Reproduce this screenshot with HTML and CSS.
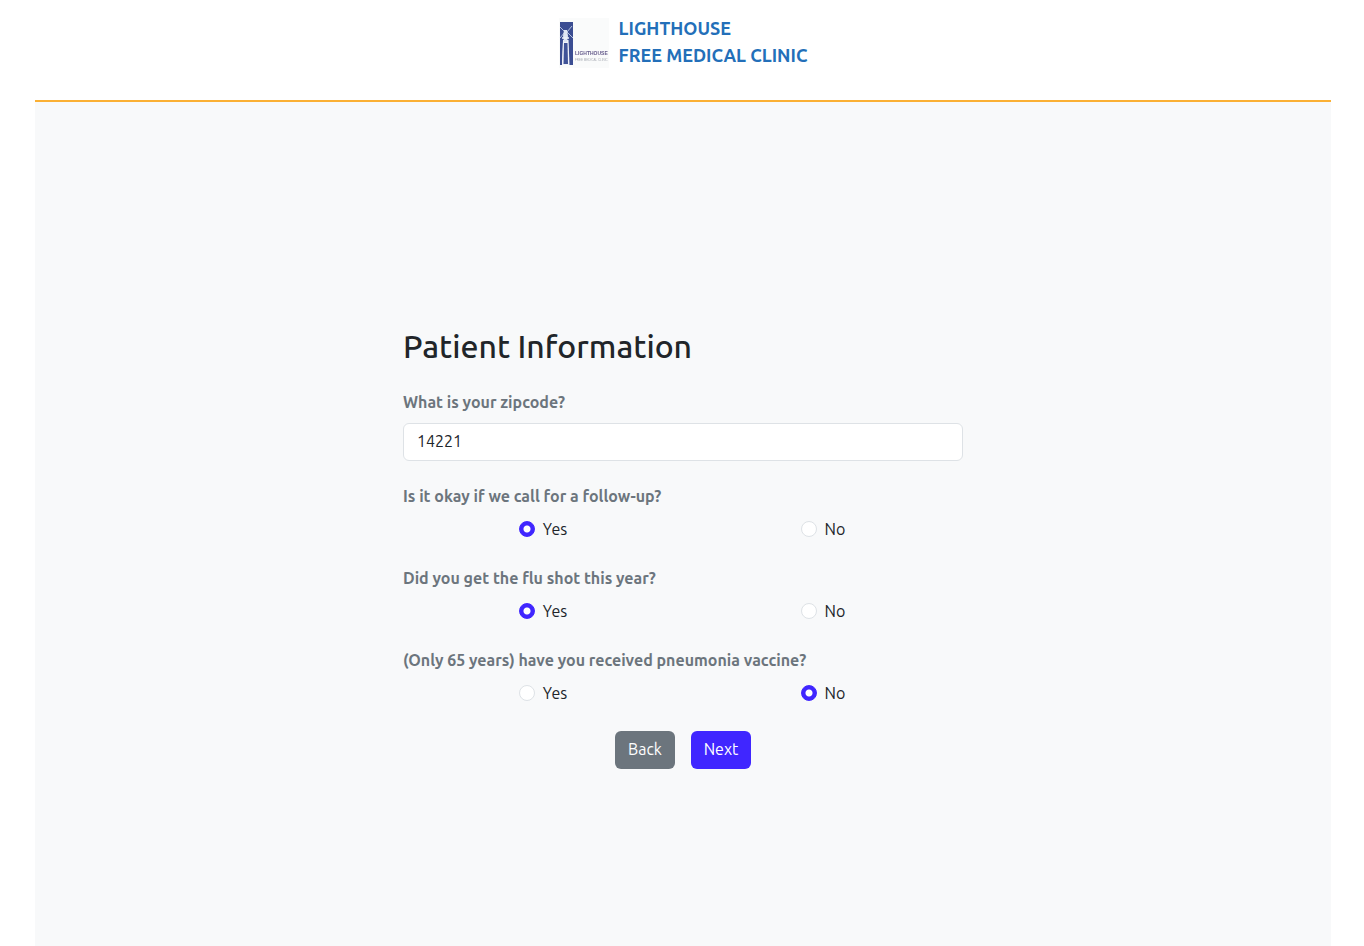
FILE: index.html
```html
<!DOCTYPE html>
<html lang="en">
<head>
<meta charset="utf-8">
<meta name="viewport" content="width=device-width, initial-scale=1">
<title>Lighthouse Free Medical Clinic</title>
<link rel="stylesheet" href="styles.css">
</head>
<body>
<div class="page">
  <header class="header">
    <svg class="logo" viewBox="0 0 50 50" role="img" aria-label="Lighthouse logo">
      <defs>
        <filter id="soft" x="-10%" y="-10%" width="120%" height="120%"><feGaussianBlur stdDeviation="0.35"/></filter>
      </defs>
      <rect width="50" height="50" fill="#fafbfb"/>
      <g filter="url(#soft)">
        <path d="M1 4H14V47H10L9 24H4L3 47H1Z" fill="#3a4d92"/>
        <path d="M3 47 4 22H9.500L10.500 47Z" fill="#f1f3f9"/>
        <path d="M5 25H8.500L9 46H4.500Z" fill="#405398"/>
        <path d="M1 9 6 14 1 20M13 8 8 14 14 20" fill="none" stroke="#b4c1df" stroke-width="1"/>
        <path d="M4 18 5 12H8L9 18 8 24H5Z" fill="#dfe6f4"/>
        <path d="M3 20H10" stroke="#eef2fa" stroke-width="1.500"/>
        <text class="logo-name" x="16" y="37">LIGHTHOUSE</text>
        <text class="logo-sub" x="16" y="43">FREE MEDICAL CLINIC</text>
      </g>
    </svg>
    <div class="brand">LIGHTHOUSE<br>FREE MEDICAL CLINIC</div>
  </header>
  <main class="main">
    <form class="form">
      <h1 class="title">Patient Information</h1>
      <div class="field">
        <label class="question" for="zip">What is your zipcode?</label>
        <input class="text-input" id="zip" type="text" value="14221">
      </div>
      <fieldset class="field">
        <legend class="question">Is it okay if we call for a follow-up?</legend>
        <div class="options">
          <label class="option"><input class="radio" type="radio" name="call" checked>Yes</label>
          <label class="option"><input class="radio" type="radio" name="call">No</label>
        </div>
      </fieldset>
      <fieldset class="field">
        <legend class="question">Did you get the flu shot this year?</legend>
        <div class="options">
          <label class="option"><input class="radio" type="radio" name="flu" checked>Yes</label>
          <label class="option"><input class="radio" type="radio" name="flu">No</label>
        </div>
      </fieldset>
      <fieldset class="field">
        <legend class="question">(Only 65 years) have you received pneumonia vaccine?</legend>
        <div class="options">
          <label class="option"><input class="radio" type="radio" name="pneumonia">Yes</label>
          <label class="option"><input class="radio" type="radio" name="pneumonia" checked>No</label>
        </div>
      </fieldset>
      <div class="actions">
        <button class="button button-back" type="button">Back</button>
        <button class="button button-next" type="button">Next</button>
      </div>
    </form>
  </main>
</div>
</body>
</html>
```
FILE: styles.css
```css
* { box-sizing: border-box; }

body {
  margin: 0;
  background: #fff;
  color: #212529;
  font: 16px/24px Ubuntu, "Noto Sans", sans-serif;
}

.page {
  display: flex;
  flex-direction: column;
  min-height: 100vh;
  padding: 0 33px 0 35px;
}

.header {
  display: flex;
  justify-content: center;
  gap: 10px;
  padding: 15px 0 31px;
  border-bottom: 2px solid #fbb034;
}

.logo {
  width: 50px;
  height: 50px;
  margin-top: 3px;
}

.logo-name {
  font: 600 5px "Liberation Sans", sans-serif;
  fill: #665c8c;
}

.logo-sub {
  font: 3px "Liberation Sans", sans-serif;
  fill: #a9adb5;
}

.brand {
  color: #236fb9;
  font-size: 18px;
  font-weight: 600;
  line-height: 27px;
}

.main {
  flex: 1;
  padding: 225px 16px 48px;
  background: #f8f9fa;
}

.form {
  max-width: 560px;
  margin: 0 auto;
}

.title {
  margin: 0 0 25px;
  font-size: 32px;
  font-weight: 500;
  line-height: 38px;
}

.field {
  min-width: 0;
  margin: 0 0 23px;
  padding: 0;
  border: 0;
}

.question {
  display: block;
  margin-bottom: 9px;
  padding: 0;
  color: #6c757d;
  font-weight: 600;
}

.text-input {
  display: block;
  width: 100%;
  height: 38px;
  padding: 5px 13px 7px;
  border: 1px solid #dee2e6;
  border-radius: 6px;
  background: #fff;
  color: inherit;
  font: inherit;
}

.options {
  display: grid;
  grid-template-columns: 1fr 1fr;
  padding-bottom: 2px;
}

.option {
  display: flex;
  justify-content: center;
  align-items: center;
  gap: 8px;
}

.radio {
  appearance: none;
  width: 16px;
  height: 16px;
  margin: 0;
  border: 1px solid #dee2e6;
  border-radius: 50%;
  background: #fff;
}

.radio:checked {
  border-color: #4026ff;
  background: radial-gradient(circle, #fff 3px, #4026ff 4px);
}

.actions {
  display: flex;
  justify-content: center;
  gap: 16px;
  padding-top: 1px;
}

.button {
  min-width: 60px;
  padding: 6px 12px 8px;
  border: 0;
  border-radius: 6px;
  color: #fff;
  font: inherit;
}

.button-back { background: #6c757d; }
.button-next { background: #4026ff; }
```
